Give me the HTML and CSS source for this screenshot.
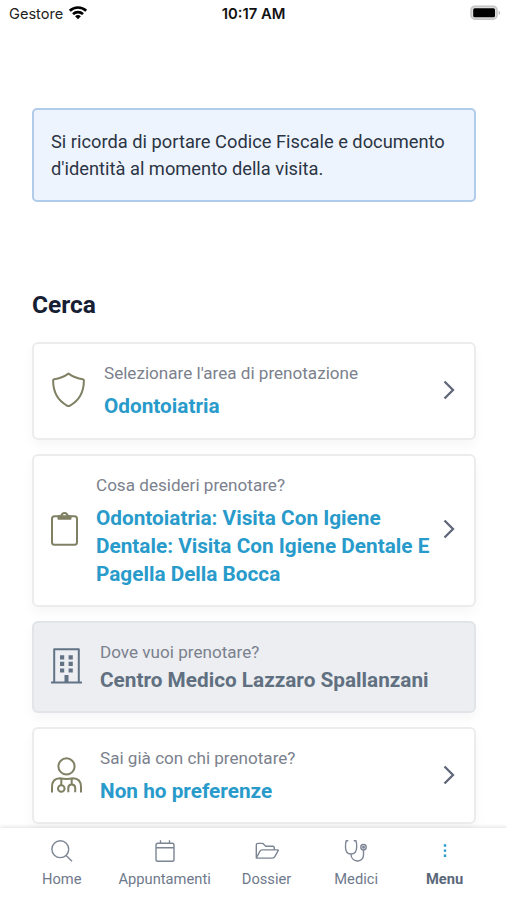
FILE: index.html
```html
<!DOCTYPE html>
<html lang="it">
<head>
<meta charset="utf-8">
<meta name="viewport" content="width=device-width">
<title>Prenota</title>
<link rel="stylesheet" href="styles.css">
</head>
<body>
<div class="app">
  <header class="status">
    <div class="carrier"><span>Gestore</span>
      <svg width="20" height="15" viewBox="0 0 20 15" fill="none" stroke="#000" stroke-width="2.7"><path d="M1.8 5.8a11.8 11.8 0 0 1 16.4 0M5 9.1a7.2 7.2 0 0 1 10 0"/><path d="M7.1 11.3a4.2 4.2 0 0 1 5.8 0L10 14.2z" fill="#000" stroke="none"/></svg>
    </div>
    <span class="time">10:17 AM</span>
    <svg class="battery" width="32" height="16" viewBox="0 0 32 16"><rect x="2" y="1.2" width="26" height="13" rx="4" fill="#ddd" stroke="#c4c4c4" stroke-width="1.5"/><rect x="4.200" y="3.300" width="21.800" height="9" rx="1.500" fill="#000"/><path d="M29.700 5.500q3 2.300 0 4.600z" fill="#b9b9b9"/></svg>
  </header>
  <main class="content">
    <p class="notice">Si ricorda di portare Codice Fiscale e documento d'identità al momento della visita.</p>
    <h1 class="title">Cerca</h1>
    <section class="list">
      <a class="card area">
        <svg class="icon" width="35" height="36" viewBox="0 0 35 36"><path d="M17.500 1.600C13 4.800 8 6.600 3.200 7.200q-1.200.2-1.100 1.400C2.200 21 6.500 28.500 16 33.600q1.500.8 3 0C28.500 28.500 32.800 21 32.900 8.600q.1-1.200-1.100-1.400C27 6.600 22 4.800 17.500 1.600z"/></svg>
        <div class="text"><span class="label">Selezionare l'area di prenotazione</span><strong class="value">Odontoiatria</strong></div>
        <svg class="chevron" width="12" height="20" viewBox="0 0 12 20"><path d="M1.500 1.500l8.500 8.500-8.500 8.500"/></svg>
      </a>
      <a class="card service">
        <svg class="icon" width="27" height="36" viewBox="0 0 27 36"><rect x="1" y="5.200" width="25" height="28.500" rx="2.500"/><path d="M7.500 5.200v2.500h12V5.200h-2.800a3.200 3.200 0 1 0-6.400 0z"/><path d="M8 6.500h11"/></svg>
        <div class="text"><span class="label">Cosa desideri prenotare?</span><strong class="value">Odontoiatria: Visita Con Igiene Dentale: Visita Con Igiene Dentale E Pagella Della Bocca</strong></div>
        <svg class="chevron" width="12" height="20" viewBox="0 0 12 20"><path d="M1.500 1.500l8.500 8.500-8.500 8.500"/></svg>
      </a>
      <a class="card place">
        <svg class="icon" width="31" height="36" viewBox="0 0 31 36"><path d="M3.200 34V1.200h24.600V34M0 34.600h31"/><path class="solid" d="M9 7.200h4.200v4.200H9zm8.600 0h4.200v4.200h-4.200zM9 13.800h4.200V18H9zm8.600 0h4.200V18h-4.200zM9 20.400h4.200v4.200H9zm8.600 0h4.200v4.200h-4.200zM13.500 27h4v7h-4z"/></svg>
        <div class="text"><span class="label">Dove vuoi prenotare?</span><strong class="value">Centro Medico Lazzaro Spallanzani</strong></div>
      </a>
      <a class="card doctor">
        <svg class="icon" width="31" height="36" viewBox="0 0 31 36"><circle cx="15.500" cy="9.400" r="8.100"/><path d="M1 35.500V30q0-8.500 8-8.700 6.500 1.400 13 0 8 .2 8 8.700v5.500M10.300 21.500v6.500M20.700 21.500v5.500M17.300 35.200V31q0-3.500 3.400-3.500t3.500 3.500v4.200"/><circle cx="10.300" cy="31.500" r="3.300"/></svg>
        <div class="text"><span class="label">Sai già con chi prenotare?</span><strong class="value">Non ho preferenze</strong></div>
        <svg class="chevron" width="12" height="20" viewBox="0 0 12 20"><path d="M1.500 1.500l8.500 8.500-8.500 8.500"/></svg>
      </a>
    </section>
  </main>
  <nav class="tabs">
    <a class="tab home"><svg width="24" height="24" viewBox="0 0 24 24"><circle cx="10.300" cy="10.200" r="8.400"/><path d="M15.800 16.300l6.200 6"/></svg><span>Home</span></a>
    <a class="tab appointments"><svg width="24" height="24" viewBox="0 0 24 24"><rect x="3" y="4.200" width="18" height="18" rx="1.800"/><path d="M3 8.800h18M7.500 4V1.300M16.500 4V1.300"/></svg><span>Appuntamenti</span></a>
    <a class="tab records"><svg width="24" height="24" viewBox="0 0 24 24"><path d="M1.300 19V6q0-1.600 1.600-1.600h5l2.800 2.800h7q1.600 0 1.600 1.600v2.100M1.300 19l3.500-6.600q.8-1.500 2.400-1.500h15.600q.8 0 .4.800l-3.400 6q-.8 1.400-2.400 1.400H2.500q-1.200 0-1.200-1z"/></svg><span>Dossier</span></a>
    <a class="tab doctors"><svg width="24" height="24" viewBox="0 0 24 24"><path d="M4.300 1.800H2.200Q1.500 4 1.500 8q0 7 5.500 7t5.700-7q0-4-.7-6.200H9.700M7 15c0 9 12.500 9.200 12.500 1V11"/><circle cx="19.500" cy="8.200" r="2.700"/><circle cx="19.500" cy="8.200" r=".8"/></svg><span>Medici</span></a>
    <a class="tab active"><svg width="24" height="24" viewBox="0 0 24 24"><path d="M10.800 5.300h2.400v2.400h-2.400zm0 5.100h2.400v2.400h-2.400zm0 5.100h2.400v2.400h-2.400z"/></svg><span>Menu</span></a>
  </nav>
</div>
</body>
</html>
```
FILE: styles.css
```css
* { box-sizing: border-box; }
body { margin: 0; background: #fff; font-family: Roboto, sans-serif; }
.app { height: 900px; display: flex; flex-direction: column; overflow: hidden; }
.status {
  height: 28px; flex: none; padding: 0 6px 1px 9px;
  display: grid; grid-template-columns: 1fr auto 1fr; align-items: center;
  font-family: Inter, sans-serif; font-size: 14.6px; color: #222;
}
.carrier { display: flex; align-items: center; gap: 5px; }
.carrier svg { margin-top: -3px; }
.time { margin-right: 3px; font-weight: 600; font-size: 14.8px; color: #111; }
.battery { justify-self: end; margin-top: -1px; }
.content { flex: 1; min-height: 0; padding: 80px 31px 0 32px; }
.notice {
  height: 94px; margin: 0; padding: 18px 17px; border: 2px solid #b1cceb; border-radius: 5px;
  background: #eef4fe; color: #2b3544; font-size: 18.3px; line-height: 27px;
}
.title { margin: 87px 0 21px; font-size: 24.5px; line-height: 32px; font-weight: 700; color: #172033; }
.list { display: flex; flex-direction: column; gap: 14px; }
.card {
  display: flex; align-items: center; padding: 0 19px 0 17px;
  border: 2px solid #ebecee; border-radius: 6px; background: #fff;
  box-shadow: 0 6px 12px rgba(0, 0, 0, .035);
}
.doctor { height: 97px; }
.area { height: 98px; padding-bottom: 1px; }
.service { height: 153px; padding-bottom: 1px; }
.place { height: 92px; background: #eceef2; border-color: #e1e4e8; }
.icon { flex: none; margin-top: -2px; fill: none; stroke: #808064; stroke-width: 2; stroke-linejoin: round; }
.text { flex: 1; display: flex; flex-direction: column; margin-left: 18px; }
.service .text { margin-right: -8px; }
.label { font-size: 17.1px; line-height: 24px; color: #7b818d; }
.value { margin-top: 7px; font-size: 20.75px; line-height: 28px; font-weight: 700; color: #289bcb; }
.place .icon { stroke: #627386; }
.place .solid { fill: #627386; stroke: none; }
.place .value { margin-top: 2px; color: #617080; }
.chevron { flex: none; margin-top: -2px; fill: none; stroke: #5f6778; stroke-width: 2.3; }
.tabs {
  position: relative; height: 72px; flex: none; padding: 11px 0 0 42px;
  display: flex;
  background: #fff; box-shadow: 0 -1px 4px rgba(0, 0, 0, .12);
}
.tab { display: flex; flex-direction: column; align-items: center; color: #6e798b; font-size: 14.7px; line-height: 20px; }
.tab svg { margin-bottom: 6px; fill: none; stroke: #7c8594; stroke-width: 1.4; stroke-linejoin: round; }
.appointments { margin-left: 37px; }
.records { margin-left: 31px; }
.doctors { margin-left: 43px; }
.active { margin-left: 48px; font-weight: 700; color: #5b6879; }
.active svg { fill: #289bcb; stroke: none; }
```
